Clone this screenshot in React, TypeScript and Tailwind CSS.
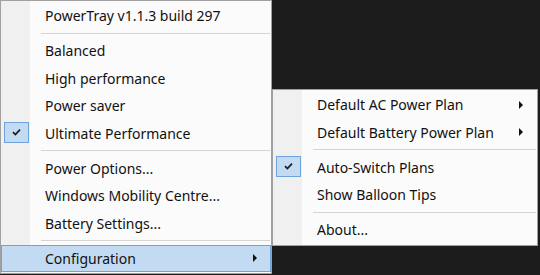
import clsx from 'clsx';

interface MenuItem {
  label: string;
  checked?: boolean;
  arrow?: boolean;
  hot?: boolean;
}

type Entry = MenuItem | 'sep';

const mainMenu: Entry[] = [
  { label: 'PowerTray v1.1.3 build 297' },
  'sep',
  { label: 'Balanced' },
  { label: 'High performance' },
  { label: 'Power saver' },
  { label: 'Ultimate Performance', checked: true },
  'sep',
  { label: 'Power Options...' },
  { label: 'Windows Mobility Centre...' },
  { label: 'Battery Settings...' },
  'sep',
  { label: 'Configuration', arrow: true, hot: true },
];

const subMenu: Entry[] = [
  { label: 'Default AC Power Plan', arrow: true },
  { label: 'Default Battery Power Plan', arrow: true },
  'sep',
  { label: 'Auto-Switch Plans', checked: true },
  { label: 'Show Balloon Tips' },
  'sep',
  { label: 'About...' },
];

const Separator = () => (
  <div className="flex h-[7.5px] items-center pl-[40px] pr-[1px]">
    <div className="h-px w-full bg-[#d4d4d4]" />
  </div>
);

const Row = ({ label, checked, arrow, hot }: MenuItem) => (
  <div
    className={clsx(
      'flex h-[27.5px] items-center border',
      hot ? 'border-[#6ea3dc] bg-[#c2dbf3]' : 'border-transparent'
    )}
  >
    <div className="flex h-full w-[43px] shrink-0 items-start">
      {checked && (
        <div className="ml-[2px] mt-[1px] flex h-[21px] w-[25px] items-center justify-center border border-[#6ea3dc] bg-[#c2dbf3]">
          <svg width="9" height="8" viewBox="0 0 9 8" fill="none">
            <path d="M1 4.2 L3.4 6.6 L8 1.6" stroke="#1a1a1a" strokeWidth="1.7" />
          </svg>
        </div>
      )}
    </div>
    <span className="flex-1 whitespace-nowrap">{label}</span>
    {arrow && (
      <svg width="4" height="8" viewBox="0 0 4 8" className="mr-[13px]">
        <polygon points="0,0 4,4 0,8" fill="#111" />
      </svg>
    )}
  </div>
);

const Menu = ({ entries, className }: { entries: Entry[]; className?: string }) => (
  <div
    className={clsx(
      'flex shrink-0 flex-col border border-[#a0a0a0] bg-[linear-gradient(to_right,#f0f0f0_29px,#fbfbfb_29px)] py-px',
      className
    )}
  >
    {entries.map((e, i) => (e === 'sep' ? <Separator key={i} /> : <Row key={i} {...e} />))}
  </div>
);

export default function App() {
  return (
    <div className="flex h-[275px] w-[540px] items-start overflow-hidden bg-[#1c1c1c] font-['Noto_Sans',sans-serif] text-[14px] text-[#111]">
      <Menu entries={mainMenu} className="w-[272px]" />
      <Menu entries={subMenu} className="mt-[89px] w-[266px]" />
    </div>
  );
}
